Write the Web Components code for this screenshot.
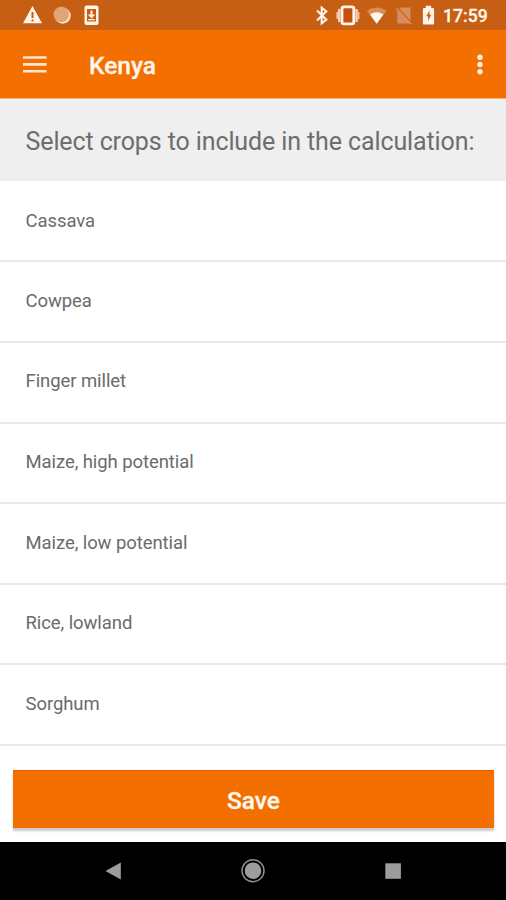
<!DOCTYPE html>
<html lang="en">
<head>
<meta charset="utf-8">
<title>Kenya</title>
<style>
html,body{margin:0;height:100%}
body{font-family:Roboto,"Noto Sans",sans-serif;background:#fff;overflow:hidden}
</style>
</head>
<body>
<crop-screen></crop-screen>
<script>
const define = (name, html) => customElements.define(name, class extends HTMLElement {
  constructor() {
    super();
    this.attachShadow({mode: 'open'}).innerHTML = html;
  }
});

define('status-bar', `
<style>
:host{display:block;height:30px;background:#c65f13;color:#fff3ea}
.bar{display:flex;justify-content:space-between;height:30px}
svg{display:block;flex:none}
.right{display:flex}
span{font-size:17.6px;font-weight:500;line-height:32px;width:63px;white-space:nowrap;-webkit-text-stroke:.3px #fff3ea}
</style>
<div class="bar">
<svg width="110" height="30" viewBox="0 0 110 30">
  <path fill="#fff3ea" fill-rule="evenodd" d="M32.500 6 42 23.200H23zM31.500 12v6h2v-6zM31.500 19.400v2h2v-2z"/>
  <circle cx="62.700" cy="15.700" r="8" fill="#ffe6d0"/>
  <circle cx="61.400" cy="14.500" r="7.800" fill="#e2a577"/>
  <path fill="#fff3ea" fill-rule="evenodd" d="M86.500 5.500h10a2 2 0 0 1 2 2v15.500a2 2 0 0 1-2 2h-10a2 2 0 0 1-2-2v-15.500a2 2 0 0 1 2-2zM87 9v12.500h9V9z"/>
  <path fill="#fff3ea" d="M90.500 10.500h2v4h2.800l-3.800 4-3.800-4h2.800zM88.200 19h6.600v1.300h-6.600z"/>
</svg>
<div class="right">
<svg width="130" height="30" viewBox="313 0 130 30">
  <path fill="none" stroke="#fff3ea" stroke-width="2.100" d="M317 10.600 326.300 19.700 321.700 23.400V7.600L326.300 11.300 317 20.400"/>
  <rect x="342" y="6.900" width="11.800" height="17" rx="1.800" fill="#c4500e" stroke="#fff3ea" stroke-width="2.800"/>
  <path stroke="#f7d6bd" stroke-width="2.300" d="M339.200 9v13M356.600 9v13"/>
  <path stroke="#efbf9c" stroke-width="1.700" d="M337.200 12v7M358.600 12v7"/>
  <path fill="#d98c55" d="M366.800 10.700Q376.700 4.200 386.600 10.700L376.700 23.800z"/>
  <path fill="#fff8f0" d="M370 14.600Q376.700 10 383.400 14.600L376.700 23.800z"/>
  <path fill="#d78d5d" d="M398.300 9.500 401.500 7.500H410.500V23.500H397.300V10.500z"/>
  <path stroke="#c65f13" stroke-width="1.400" d="M397.500 8 411.800 23.300"/>
  <path stroke="#d78d5d" stroke-width="1.400" d="M396.300 8.300 411.300 24.300"/>
  <path fill="#fff3ea" d="M425.800 5.800h5.400v2.200h1.700q1.200 0 1.200 1.200v14.200q0 1.200-1.200 1.200h-8.800q-1.200 0-1.200-1.200V9.200q0-1.200 1.200-1.200h1.700z"/>
  <path fill="#c65f13" d="M429.400 10.600 426.300 16.200h1.900v4.700l3-6.100h-1.800z"/>
</svg>
<span>17:59</span>
</div>
</div>`);

define('app-bar', `
<style>
:host{display:block;background:#f26f00;border-bottom:1px solid #f6b68a;box-sizing:border-box;height:69px}
.bar{display:flex;align-items:center;height:68px}
svg{display:block;flex:none}
.menu{margin-left:23px;margin-top:2px}
h1{margin:0 auto 0 42px;font-size:24.500px;line-height:30px;font-weight:500;color:#fff5ee;padding-top:3px;white-space:nowrap;-webkit-text-stroke:.3px #fff5ee}
.more{margin-right:20px}
</style>
<div class="bar">
<svg class="menu" width="24" height="20" viewBox="0 0 24 20"><path fill="#ffe5d2" d="M0 1.200h23.500v2.600H0zM0 8.100h23.500v2.600H0zM0 15h23.500v2.600H0z"/></svg>
<h1><slot></slot></h1>
<svg class="more" width="12" height="24" viewBox="0 0 12 24"><g fill="#fff0e5"><circle cx="6" cy="5.300" r="2.700"/><circle cx="6" cy="12.500" r="2.700"/><circle cx="6" cy="19.700" r="2.700"/></g></svg>
</div>`);

define('list-heading', `
<style>
:host{display:block;background:#efefef;height:82.200px;box-sizing:border-box;padding:27px 0 0 25.500px;color:#6d6d6d;font-size:25px;letter-spacing:-.11px;line-height:32px;white-space:nowrap}
</style><slot></slot>`);

define('crop-row', `
<style>
:host{display:flex;align-items:center;height:80.650px;box-sizing:border-box;border-bottom:2px solid #e8e8e8;padding:0 25.500px 1.600px;color:#6b6b6b;font-size:18.500px;letter-spacing:-.08px;line-height:24px;white-space:nowrap}
:host(:first-of-type){height:81.100px;padding-bottom:0}
</style><slot></slot>`);

define('save-button', `
<style>
:host{display:block;margin:0 12px 0 13px}
button{display:block;width:100%;height:58px;border:0;border-top:1px solid #e55d00;padding:2px 0 0;background:#f26f00;color:#fff7f0;font:500 24.500px Roboto,"Noto Sans",sans-serif;-webkit-text-stroke:.3px #fff7f0;box-shadow:0 3px 2px #c8cacd}
</style><button><slot></slot></button>`);

define('nav-bar', `
<style>
:host{display:block;background:#000;height:58px}
.bar{display:flex;justify-content:center;align-items:center;gap:114px;height:58px}
svg{display:block}
</style>
<div class="bar">
<svg width="26" height="26" viewBox="0 0 26 26"><path fill="#9d9d9d" d="M5.500 13 20.800 4.500V21.500z"/></svg>
<svg width="26" height="26" viewBox="0 0 26 26"><circle cx="13" cy="12.700" r="11" fill="none" stroke="#8e8e8e" stroke-width="1.500"/><circle cx="13" cy="12.700" r="8.300" fill="#9d9d9d"/></svg>
<svg width="26" height="26" viewBox="0 0 26 26"><path fill="#9d9d9d" d="M5.300 5.300h15.600v15.500H5.300z"/></svg>
</div>`);

define('crop-screen', `
<style>
:host{display:flex;flex-direction:column;width:506px;height:900px;background:#fff}
main{flex:1;min-height:0}
save-button{margin-top:23.600px}
</style>
<status-bar></status-bar>
<app-bar>Kenya</app-bar>
<main>
<list-heading>Select crops to include in the calculation:</list-heading>
<crop-row>Cassava</crop-row>
<crop-row>Cowpea</crop-row>
<crop-row>Finger millet</crop-row>
<crop-row>Maize, high potential</crop-row>
<crop-row>Maize, low potential</crop-row>
<crop-row>Rice, lowland</crop-row>
<crop-row>Sorghum</crop-row>
<save-button>Save</save-button>
</main>
<nav-bar></nav-bar>`);
</script>
</body>
</html>
